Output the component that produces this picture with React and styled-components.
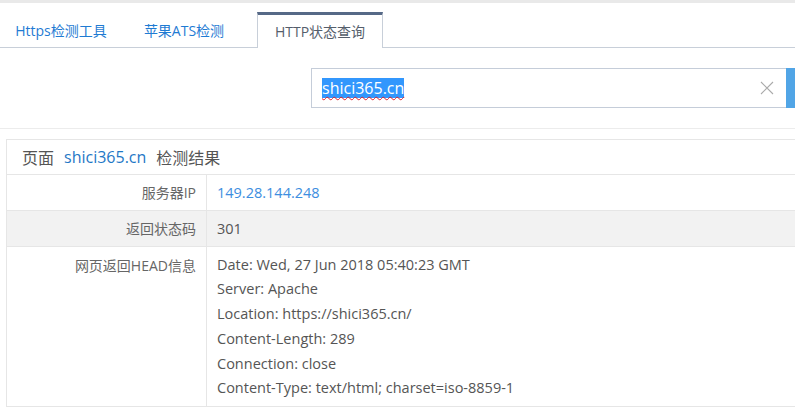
import React from "react";
import styled, { createGlobalStyle } from "styled-components";

const Global = createGlobalStyle`
  html, body { margin: 0; padding: 0; background: #fff; overflow: hidden; }
  body { font-family: "Open Sans", "Noto Sans CJK SC", sans-serif; color: #555; }
`;

const Page = styled.div`
  width: 795px;
  height: 411px;
  overflow: hidden;
  border-top: 3px solid #e9e9e9;
  box-sizing: border-box;
`;

const TabBar = styled.div`
  display: flex;
  align-items: flex-end;
  height: 45px;
  border-bottom: 1px solid #c8cfd9;
  box-sizing: border-box;
`;

const Tab = styled.div`
  height: 35px;
  display: flex;
  align-items: center;
  justify-content: center;
  width: ${(p) => p.$w}px;
  font-size: 14px;
  color: ${(p) => (p.$active ? "#555e6b" : "#1f7bd3")};
  box-sizing: border-box;
  ${(p) =>
    p.$active &&
    `
    height: 36px;
    margin: 0 0 -1px 11px;
    background: #fff;
    border-top: 3px solid #566987;
    border-left: 1px solid #c8cfd9;
    border-right: 1px solid #c8cfd9;
    padding-bottom: 2px;
  `}
`;

const SearchSection = styled.div`
  height: 81px;
  border-bottom: 1px solid #ececec;
  box-sizing: border-box;
  display: flex;
  align-items: flex-start;
  padding: 20px 0 0 311px;
`;

const InputBox = styled.div`
  flex: 0 0 475px;
  height: 40px;
  box-sizing: border-box;
  border: 1px solid #c5cdd9;
  border-right: none;
  display: flex;
  align-items: center;
  padding: 0 12px 0 10px;
`;

const Selected = styled.span`
  font-size: 16px;
  line-height: 20px;
  color: #fff;
  background: #3297fd;
  text-decoration: underline wavy #e0202a;
  text-decoration-thickness: 1px;
  text-underline-offset: 2px;
`;

const Spacer = styled.div`
  flex: 1;
`;

const SubmitButton = styled.div`
  flex: 0 0 80px;
  height: 40px;
  background: #51a5e6;
`;

const Card = styled.div`
  margin: 10px 0 0 6px;
  width: 900px;
  border: 1px solid #e6e6e6;
  box-sizing: border-box;
`;

const CardHeader = styled.div`
  height: 34px;
  display: flex;
  align-items: center;
  padding-left: 15px;
  font-size: 16px;
  color: #555;
  border-bottom: 1px solid #e6e6e6;
  gap: 10px;
`;

const Domain = styled.span`
  color: #1f78c6;
`;

const Row = styled.div`
  display: grid;
  grid-template-columns: 200px 1fr;
  background: ${(p) => (p.$alt ? "#f2f2f2" : "#fff")};
  border-bottom: ${(p) => (p.$last ? "none" : "1px solid #e6e6e6")};
`;

const Label = styled.div`
  text-align: right;
  padding: ${(p) => (p.$multi ? "5.5px" : "0")} 10px 0 0;
  min-height: 35px;
  line-height: ${(p) => (p.$multi ? "25px" : "35px")};
  font-size: 14px;
  color: #666;
  border-right: 1px solid #e6e6e6;
`;

const Value = styled.div`
  padding: ${(p) => (p.$multi ? "5.5px 0 5px" : "0")} 10px;
  line-height: ${(p) => (p.$multi ? "24.8px" : "35px")};
  font-size: 14.5px;
  color: ${(p) => (p.$link ? "#3d8ee0" : "#555")};
`;

function ClearIcon() {
  return (
    <svg width="14" height="14" viewBox="0 0 14 14">
      <path d="M1 1 L13 13 M13 1 L1 13" stroke="#aaa" strokeWidth="1.1" />
    </svg>
  );
}

const headers = [
  "Date: Wed, 27 Jun 2018 05:40:23 GMT",
  "Server: Apache",
  "Location: https://shici365.cn/",
  "Content-Length: 289",
  "Connection: close",
  "Content-Type: text/html; charset=iso-8859-1",
];

export default function App() {
  return (
    <>
      <Global />
      <Page>
        <TabBar>
          <Tab $w={122}>Https检测工具</Tab>
          <Tab $w={124}>苹果ATS检测</Tab>
          <Tab $w={126} $active>HTTP状态查询</Tab>
        </TabBar>
        <SearchSection>
          <InputBox>
            <Selected>shici365.cn</Selected>
            <Spacer />
            <ClearIcon />
          </InputBox>
          <SubmitButton />
        </SearchSection>
        <Card>
          <CardHeader>
            <span>页面</span>
            <Domain>shici365.cn</Domain>
            <span>检测结果</span>
          </CardHeader>
          <Row>
            <Label>服务器IP</Label>
            <Value $link>149.28.144.248</Value>
          </Row>
          <Row $alt>
            <Label>返回状态码</Label>
            <Value>301</Value>
          </Row>
          <Row $last>
            <Label $multi>网页返回HEAD信息</Label>
            <Value $multi>
              {headers.map((h) => (
                <div key={h}>{h}</div>
              ))}
            </Value>
          </Row>
        </Card>
      </Page>
    </>
  );
}
